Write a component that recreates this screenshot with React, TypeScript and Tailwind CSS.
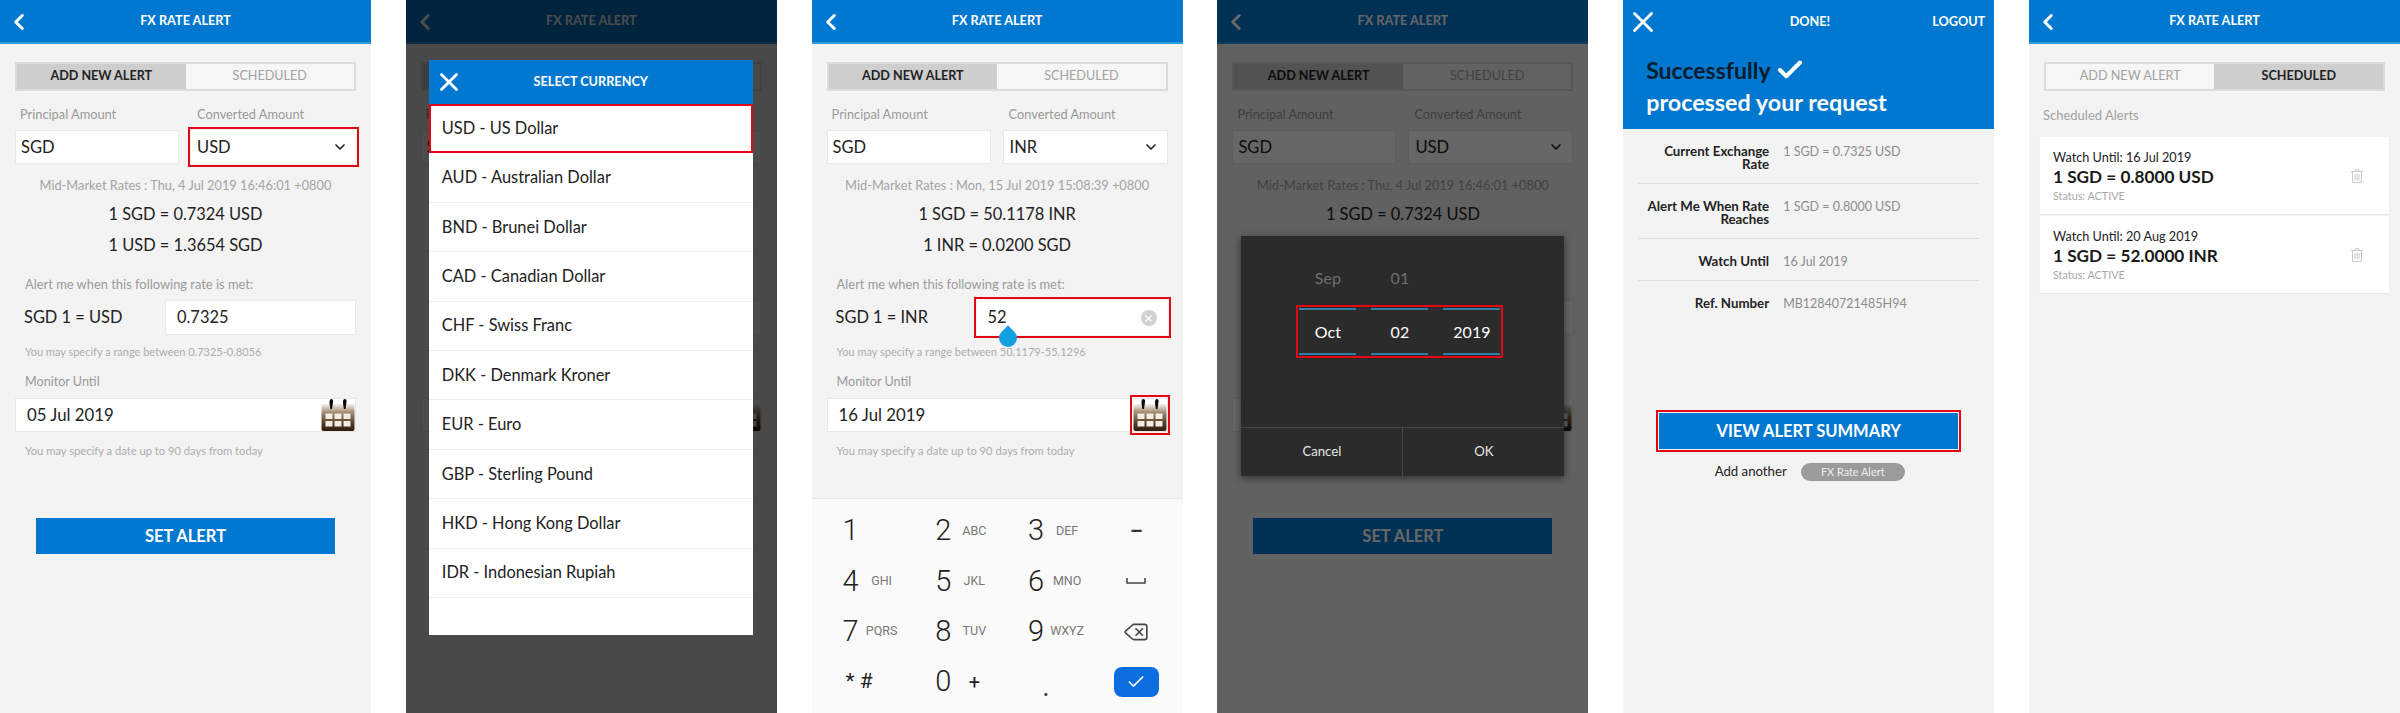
import React from 'react';
import { ChevronDown, ChevronLeft, Delete, Check, X } from 'lucide-react';

const CalendarIcon = () => (
  <svg width="34" height="34" viewBox="0 0 34 34" className="block">
    <defs>
      <linearGradient id="calBody" x1="0" y1="0" x2="0" y2="1">
        <stop offset="0" stopColor="#f6f1ea" />
        <stop offset="0.3" stopColor="#a58e76" />
        <stop offset="0.7" stopColor="#5a3f28" />
        <stop offset="1" stopColor="#2f1b0c" />
      </linearGradient>
    </defs>
    <rect x="0.5" y="6" width="33" height="27" rx="2" fill="url(#calBody)" />
    <path d="M10 1c1.800 0 2.400 1 2 3.200l-1 6.800H9.400L8.600 6C8.300 3.500 8.700 1 10 1zM23.500 1c1.800 0 2.400 1 2 3.200l-1 6.800h-1.600L22.100 6c-.3-2.500.1-5 1.400-5z" fill="#0c0c0c" />
    <g fill="#f2ece4">
      <rect x="4.500" y="15.500" width="7" height="5.500" />
      <rect x="13.500" y="15.500" width="7" height="5.500" />
      <rect x="22.500" y="15.500" width="7" height="5.500" />
      <rect x="4.500" y="23" width="7" height="5.500" />
      <rect x="13.500" y="23" width="7" height="5.500" />
      <rect x="22.500" y="23" width="7" height="5.500" />
    </g>
  </svg>
);

const TrashIcon = () => (
  <svg width="12" height="14" viewBox="0 0 12 14" fill="none" stroke="#c9c9c9" strokeWidth="1">
    <path d="M0 2.500h12M4 2.500V.8h4v1.700M1.500 2.500v11h9v-11M4 5v6.500M6 5v6.500M8 5v6.500" />
  </svg>
);

const Header = ({ title }: { title: string }) => (
  <div className="relative flex h-[44px] shrink-0 items-center justify-center border-b-2 border-[#2f9ae0] bg-[#0078d0]">
    <ChevronLeft className="absolute left-[6px] top-[9px] text-white" size={26} strokeWidth={2.8} />
    <span className="text-[12.7px] font-bold text-white">{title}</span>
  </div>
);

const Tabs = ({ active }: { active: 'add' | 'scheduled' }) => (
  <div className="mx-[15px] mt-[18px] flex h-[29px] border-2 border-[#dcdcdc] bg-[#f6f6f6] text-[12.6px]">
    <div className={active === 'add' ? 'flex w-1/2 items-center justify-center bg-[#cecece] font-bold text-[#222]' : 'flex w-1/2 items-center justify-center text-[#a2a2a2]'}>
      ADD NEW ALERT
    </div>
    <div className={active === 'scheduled' ? 'flex w-1/2 items-center justify-center bg-[#cecece] font-bold text-[#222]' : 'flex w-1/2 items-center justify-center text-[#a2a2a2]'}>
      SCHEDULED
    </div>
  </div>
);

interface FormProps {
  currency: string;
  stamp: string;
  rateA: string;
  rateB: string;
  rate: string;
  date: string;
  hint: string;
  redSelect?: boolean;
  redRate?: boolean;
  redCal?: boolean;
  hideButton?: boolean;
}

const RED = 'outline-2 outline-offset-1 outline-[#e30613]';

const Form = ({ currency, stamp, rateA, rateB, rate, date, hint, redSelect, redRate, redCal, hideButton }: FormProps) => (
  <div>
    <Tabs active="add" />
    <div className="mt-[15px] flex text-[12.8px] leading-[16px] text-[#9a9a9a]">
      <div className="w-[197px] pl-[20px]">Principal Amount</div>
      <div>Converted Amount</div>
    </div>
    <div className="mt-[8px] flex h-[34px] px-[15px] text-[16.5px] text-[#222]">
      <div className="flex w-[164px] items-center border border-[#e8e8e8] bg-white pl-[5px]">SGD</div>
      <div className={`ml-[12px] flex w-[165px] items-center justify-between bg-white px-[6px] ${redSelect ? RED : 'border border-[#e8e8e8]'}`}>
        {currency}
        <ChevronDown size={16} strokeWidth={2.5} className="mr-[2px] text-[#222]" />
      </div>
    </div>
    <div className="mt-[13px] text-center text-[12.8px] leading-[16px] text-[#a4a4a4]">{stamp}</div>
    <div className="mt-[11px] text-center text-[16.4px] leading-[20px] text-[#222]">{rateA}</div>
    <div className="mt-[11px] text-center text-[16.4px] leading-[20px] text-[#222]">{rateB}</div>
    <div className="mt-[21px] pl-[25px] text-[12.9px] leading-[16px] text-[#9a9a9a]">Alert me when this following rate is met:</div>
    <div className="mt-[8px] flex h-[35px] items-center pl-[24px] pr-[15px] text-[16.4px] text-[#222]">
      <div className="w-[141px]">SGD 1 = {currency}</div>
      <div className={`relative flex h-full flex-1 items-center bg-white pl-[11px] ${redRate ? RED : 'border border-[#e8e8e8]'}`}>
        {rate}
        {redRate && (
          <>
            <span className="absolute right-[11px] top-[10px] flex h-[16px] w-[16px] items-center justify-center rounded-full bg-[#d2d2d2]">
              <X size={11} strokeWidth={2.5} className="text-white" />
            </span>
            <span className="absolute left-[22px] top-[29px] h-[18px] w-[18px] rotate-45 rounded-full rounded-tl-none bg-[#12a0e0]" />
          </>
        )}
      </div>
    </div>
    <div className="mt-[10px] pl-[25px] text-[11px] leading-[14px] text-[#adadad]">You may specify a range between {hint}</div>
    <div className="mt-[15px] pl-[25px] text-[12.6px] leading-[16px] text-[#9a9a9a]">Monitor Until</div>
    <div className="mx-[15px] mt-[8px] flex h-[34px] items-center justify-between border border-[#e8e8e8] bg-white pl-[11px] text-[16.8px] text-[#222]">
      {date}
      <div className={redCal ? RED : ''}>
        <CalendarIcon />
      </div>
    </div>
    <div className="mt-[12px] pl-[25px] text-[11.2px] leading-[14px] text-[#adadad]">You may specify a date up to 90 days from today</div>
    {!hideButton && (
      <div className="mx-[36px] mt-[60px] flex h-[36px] items-center justify-center bg-[#0078d0] text-[16.5px] font-bold text-white">SET ALERT</div>
    )}
  </div>
);

const currencies = [
  'USD - US Dollar',
  'AUD - Australian Dollar',
  'BND - Brunei Dollar',
  'CAD - Canadian Dollar',
  'CHF - Swiss Franc',
  'DKK - Denmark Kroner',
  'EUR - Euro',
  'GBP - Sterling Pound',
  'HKD - Hong Kong Dollar',
  'IDR - Indonesian Rupiah',
];

const keys = [
  ['1', ''], ['2', 'ABC'], ['3', 'DEF'],
  ['4', 'GHI'], ['5', 'JKL'], ['6', 'MNO'],
  ['7', 'PQRS'], ['8', 'TUV'], ['9', 'WXYZ'],
];

const Key = ({ digit, letters }: { digit: string; letters: string }) => (
  <div className="flex items-center pl-[27px]">
    <span className="w-[24px] text-center text-[29px] font-light text-[#222]">{digit}</span>
    <span className="w-[38px] text-center text-[12.5px] text-[#777]">{letters}</span>
  </div>
);

const Keypad = () => (
  <div className="mt-auto grid h-[215px] grid-cols-4 grid-rows-4 border-t border-[#e8e8e8] bg-[#fafafa] pb-[6px] pt-[7px] font-['Roboto',sans-serif]">
    {keys.slice(0, 3).map(([d, l]) => <Key key={d} digit={d} letters={l} />)}
    <div className="flex items-center justify-center text-[20px] font-bold text-[#333]">–</div>
    {keys.slice(3, 6).map(([d, l]) => <Key key={d} digit={d} letters={l} />)}
    <div className="flex items-center justify-center">
      <svg width="20" height="6" viewBox="0 0 20 6" fill="none" stroke="#444" strokeWidth="1.5">
        <path d="M1 0v5h18V0" />
      </svg>
    </div>
    {keys.slice(6).map(([d, l]) => <Key key={d} digit={d} letters={l} />)}
    <div className="flex items-center justify-center">
      <Delete size={26} strokeWidth={1.5} className="text-[#444]" />
    </div>
    <div className="flex items-center pl-[34px] text-[21px] text-[#222]">* #</div>
    <div className="flex items-center pl-[27px]">
      <span className="w-[24px] text-center text-[29px] font-light text-[#222]">0</span>
      <span className="w-[38px] text-center text-[20px] text-[#222]">+</span>
    </div>
    <div className="flex items-end justify-center pb-[8px] pl-[8px] pr-[3px] text-[20px] font-bold leading-none text-[#333]">.</div>
    <div className="flex items-center justify-center">
      <div className="flex h-[30px] w-[45px] items-center justify-center rounded-lg bg-[#0a6ee0]">
        <Check size={20} strokeWidth={2} className="text-white" />
      </div>
    </div>
  </div>
);

const details = [
  { label: 'Current Exchange Rate', value: '1 SGD = 0.7325 USD' },
  { label: 'Alert Me When Rate Reaches', value: '1 SGD = 0.8000 USD' },
  { label: 'Watch Until', value: '16 Jul 2019' },
  { label: 'Ref. Number', value: 'MB12840721485H94' },
];

const alerts = [
  { until: '16 Jul 2019', rate: '1 SGD = 0.8000 USD' },
  { until: '20 Aug 2019', rate: '1 SGD = 52.0000 INR' },
];

const Phone = ({ children }: { children: React.ReactNode }) => (
  <div className="relative flex h-[713px] w-[371px] shrink-0 flex-col overflow-hidden bg-[#f3f3f3]">{children}</div>
);

const Dim = ({ className }: { className: string }) => <div className={`absolute inset-0 ${className}`} />;

const App = () => {
  return (
    <div className="flex h-[713px] w-[2400px] justify-between bg-white font-['Lato','Noto_Sans',sans-serif]">
      {/* 1: new alert */}
      <Phone>
        <Header title="FX RATE ALERT" />
        <Form currency="USD" stamp="Mid-Market Rates : Thu, 4 Jul 2019 16:46:01 +0800" rateA="1 SGD = 0.7324 USD" rateB="1 USD = 1.3654 SGD" rate="0.7325" date="05 Jul 2019" hint="0.7325-0.8056" redSelect />
      </Phone>

      {/* 2: currency picker */}
      <Phone>
        <Header title="FX RATE ALERT" />
        <Form currency="USD" stamp="Mid-Market Rates : Thu, 4 Jul 2019 16:46:01 +0800" rateA="1 SGD = 0.7324 USD" rateB="1 USD = 1.3654 SGD" rate="0.7325" date="05 Jul 2019" hint="0.7325-0.8056" />
        <Dim className="bg-black/70" />
        <div className="absolute left-[23px] top-[60px] flex h-[575px] w-[324px] flex-col bg-white">
          <div className="relative flex h-[44px] shrink-0 items-center justify-center bg-[#0078d0] text-[12.7px] font-bold text-white">
            <X className="absolute left-[5px] top-[7px]" size={30} strokeWidth={2.2} />
            SELECT CURRENCY
          </div>
          {currencies.map((c, i) => (
            <div key={c} className={`flex h-[49.4px] shrink-0 items-center text-[16.4px] text-[#222] ${i === 0 ? 'border-2 border-[#e30613] pl-[11px]' : 'border-b border-[#eeeeee] pl-[13px]'}`}>
              {c}
            </div>
          ))}
        </div>
      </Phone>

      {/* 3: entering the rate */}
      <Phone>
        <Header title="FX RATE ALERT" />
        <Form currency="INR" stamp="Mid-Market Rates : Mon, 15 Jul 2019 15:08:39 +0800" rateA="1 SGD = 50.1178 INR" rateB="1 INR = 0.0200 SGD" rate="52" date="16 Jul 2019" hint="50.1179-55.1296" redRate redCal hideButton />
        <Keypad />
      </Phone>

      {/* 4: date wheel */}
      <Phone>
        <Header title="FX RATE ALERT" />
        <Form currency="USD" stamp="Mid-Market Rates : Thu, 4 Jul 2019 16:46:01 +0800" rateA="1 SGD = 0.7324 USD" rateB="1 USD = 1.3654 SGD" rate="0.7325" date="05 Jul 2019" hint="0.7325-0.8056" />
        <Dim className="bg-black/60" />
        <div className="absolute left-[24px] top-[236px] flex h-[240px] w-[323px] flex-col bg-[#2b2b2b] shadow-[0_2px_8px_rgba(0,0,0,0.5)]">
          <div className="h-[191px] pl-[58px] pt-[32px]">
            <div className="flex gap-[15px] text-[16px] leading-[20px] text-[#6f6f6f]">
              <div className="w-[57px] text-center">Sep</div>
              <div className="w-[57px] text-center">01</div>
            </div>
            <div className={`mt-[20px] flex h-[47px] w-[201px] gap-[15px] text-[16px] text-white ${RED}`}>
              {['Oct', '02', '2019'].map((v) => (
                <div key={v} className="flex w-[57px] items-center justify-center border-y-2 border-[#2f7fa6]">{v}</div>
              ))}
            </div>
          </div>
          <div className="flex flex-1 border-t border-[#484848] text-[13.2px] text-[#e6e6e6]">
            <div className="flex w-[162px] items-center justify-center border-r border-[#484848]">Cancel</div>
            <div className="flex flex-1 items-center justify-center">OK</div>
          </div>
        </div>
      </Phone>

      {/* 5: done */}
      <Phone>
        <div className="relative h-[129px] shrink-0 bg-[#0078d0]">
          <X className="absolute left-[3px] top-[5px] text-white" size={34} strokeWidth={2} />
          <div className="flex h-[44px] items-center justify-end pr-[9px] text-[12.7px] font-bold text-white">
            <span className="mr-[102px]">DONE!</span>
            <span>LOGOUT</span>
          </div>
          <div className="mt-[11px] flex items-center pl-[23px] text-[23px] font-bold leading-[30px] text-[#0b1c2c]">
            Successfully
            <Check size={30} strokeWidth={3.2} className="ml-[4px] text-white" />
          </div>
          <div className="mt-[2px] pl-[23px] text-[23.3px] font-bold leading-[30px] text-white">processed your request</div>
        </div>
        <div className="mx-[15px]">
          {details.map((d, i) => (
            <div key={d.label} className={`flex gap-[14px] pb-[12px] pt-[16px] leading-[13px] ${i < 3 ? 'border-b border-[#dddddd]' : ''}`}>
              <div className="w-[131px] shrink-0 text-right text-[13.3px] font-bold text-[#222]">{d.label}</div>
              <div className="text-[12.5px] text-[#8c8c8c]">{d.value}</div>
            </div>
          ))}
        </div>
        <div className={`mx-[36px] mt-[91px] flex h-[36px] items-center justify-center bg-[#0078d0] text-[16.5px] font-bold text-white ${RED}`}>
          VIEW ALERT SUMMARY
        </div>
        <div className="mt-[13px] flex items-center justify-center gap-[14px] pl-[2px] text-[13.2px] text-[#222]">
          Add another
          <span className="flex h-[18px] w-[104px] items-center justify-center rounded-full bg-[#9b9b9b] text-[10.9px] text-[#eeeeee]">FX Rate Alert</span>
        </div>
      </Phone>

      {/* 6: scheduled list */}
      <Phone>
        <Header title="FX RATE ALERT" />
        <Tabs active="scheduled" />
        <div className="mt-[16px] pl-[14px] text-[13px] leading-[16px] text-[#a2a2a2]">Scheduled Alerts</div>
        <div className="mx-[11px] mt-[14px] flex flex-col gap-[2px]">
          {alerts.map((a) => (
            <div key={a.until} className="flex h-[77px] items-center justify-between bg-white pl-[13px] pr-[26px] shadow-[0_1px_1px_rgba(0,0,0,0.05)]">
              <div>
                <div className="text-[12.7px] leading-[18px] text-[#222]">Watch Until: {a.until}</div>
                <div className="text-[17.2px] font-bold leading-[22px] text-[#1a1a1a]">{a.rate}</div>
                <div className="text-[10.8px] leading-[16px] text-[#a8a8a8]">Status: ACTIVE</div>
              </div>
              <TrashIcon />
            </div>
          ))}
        </div>
      </Phone>
    </div>
  );
};

export default App;
